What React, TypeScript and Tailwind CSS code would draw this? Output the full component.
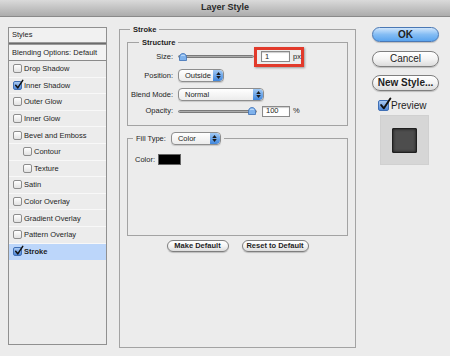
import type { ReactNode } from "react";

type StyleRow = { label: string; checked?: boolean; indent?: boolean; active?: boolean };

const styleRows: StyleRow[] = [
  { label: "Drop Shadow" },
  { label: "Inner Shadow", checked: true },
  { label: "Outer Glow" },
  { label: "Inner Glow" },
  { label: "Bevel and Emboss" },
  { label: "Contour", indent: true },
  { label: "Texture", indent: true },
  { label: "Satin" },
  { label: "Color Overlay" },
  { label: "Gradient Overlay" },
  { label: "Pattern Overlay" },
  { label: "Stroke", checked: true, active: true },
];

function Checkbox({ checked, big = false }: { checked?: boolean; big?: boolean }) {
  const box = big ? "h-[11px] w-[11px]" : "h-[9px] w-[9px]";
  return (
    <span
      className={`relative inline-block shrink-0 rounded-[2px] border ${box} ${
        checked
          ? "border-[#3f6fb5] bg-gradient-to-b from-[#a9c9f2] to-[#4f86d6]"
          : "border-[#8d8d8d] bg-gradient-to-b from-white to-[#e2e2e2]"
      }`}
    >
      {checked && (
        <svg
          viewBox="0 0 12 12"
          className={`absolute ${big ? "-top-[4px] left-[0px] h-[14px] w-[13px]" : "-top-[3px] left-[0px] h-[11px] w-[10px]"}`}
        >
          <path d="M2 7 L4.5 10 L10.5 1" fill="none" stroke="#111" strokeWidth="1.8" strokeLinecap="round" strokeLinejoin="round" />
        </svg>
      )}
    </span>
  );
}

function Stepper() {
  return (
    <span className="flex h-full w-[10px] shrink-0 flex-col items-center justify-center gap-[1px] rounded-r-[4px] bg-gradient-to-b from-[#9fc8f3] to-[#3f86dc]">
      <svg viewBox="0 0 6 4" className="h-[3px] w-[5px]">
        <path d="M0 4 L3 0 L6 4 Z" fill="#1b1b1b" />
      </svg>
      <svg viewBox="0 0 6 4" className="h-[3px] w-[5px]">
        <path d="M0 0 L3 4 L6 0 Z" fill="#1b1b1b" />
      </svg>
    </span>
  );
}

function Select({ value, width }: { value: string; width: string }) {
  return (
    <span
      className={`flex h-[13px] ${width} items-center overflow-hidden rounded-[4px] border border-[#8e8e8e] bg-gradient-to-b from-white to-[#ececec] shadow-[0_1px_1px_rgba(0,0,0,0.15)]`}
    >
      <span className="flex-1 pl-[6px] leading-none">{value}</span>
      <Stepper />
    </span>
  );
}

function Slider({ width, at }: { width: string; at: "start" | "end" }) {
  return (
    <span className={`relative flex h-[10px] ${width} items-center`}>
      <span className="h-[3px] w-full rounded-full border border-[#7a7a7a] bg-gradient-to-b from-[#8a8a8a] to-[#cfcfcf]" />
      <svg
        viewBox="0 0 8 8"
        className={`absolute top-[1px] h-[8px] w-[8px] ${at === "start" ? "left-[1px]" : "right-[1px]"}`}
      >
        <path d="M4 0.5 C6.2 0.5 7.5 2.2 7.5 4.2 L7.5 7.5 L0.5 7.5 L0.5 4.2 C0.5 2.2 1.8 0.5 4 0.5 Z" fill="#7fb2ec" stroke="#3c6fb4" strokeWidth="0.8" />
        <path d="M2 3 C2.5 2 5.5 2 6 3" fill="none" stroke="#d6e8fb" strokeWidth="0.8" />
      </svg>
    </span>
  );
}

function Field({ value, width }: { value: string; width: string }) {
  return (
    <span
      className={`flex h-[11px] ${width} items-center border border-[#8a8a8a] bg-white pl-[3px] leading-none shadow-[inset_0_1px_1px_rgba(0,0,0,0.2)]`}
    >
      {value}
    </span>
  );
}

function Row({ label, children, className = "" }: { label: string; children: ReactNode; className?: string }) {
  return (
    <div className={`flex items-center ${className}`}>
      <span className="w-[45px] shrink-0 text-right">{label}</span>
      <div className="ml-[5px] flex items-center">{children}</div>
    </div>
  );
}

function PillButton({ children, className = "", primary = false }: { children: ReactNode; className?: string; primary?: boolean }) {
  return (
    <button
      className={`flex items-center justify-center rounded-full border leading-none ${
        primary
          ? "border-[#4a78b4] bg-gradient-to-b from-[#cfe5fb] via-[#84bdf4] to-[#5aa4ee] font-bold"
          : "border-[#7f7f7f] bg-gradient-to-b from-white via-[#f4f4f4] to-[#dcdcdc]"
      } shadow-[0_1px_1px_rgba(0,0,0,0.2)] ${className}`}
    >
      {children}
    </button>
  );
}

export default function App() {
  return (
    <div className="flex h-[356px] w-[450px] flex-col overflow-hidden bg-[#ececec] font-['Liberation_Sans',Arial,sans-serif] text-[#1e1e1e]">
      <div className="flex h-[17px] shrink-0 items-center justify-center border-b border-[#8a8a8a] bg-gradient-to-b from-[#dadada] to-[#acacac] text-[9px] font-bold text-[#2a2a2a]">
        Layer Style
      </div>

      <div className="flex items-start pl-[8px] text-[7.5px]">
        {/* styles list */}
        <div className="mt-[10px] flex h-[318px] w-[99px] shrink-0 flex-col border border-[#909090] bg-[#ececec]">
          <div className="flex h-[14px] items-center bg-[#f1f1f1] pl-[3px]">Styles</div>
          <div className="h-[3px] border-y border-[#9a9a9a] bg-[#6c6c6c]" />
          <div className="flex h-[16px] items-center border-b border-[#8a8a8a] bg-[#f3f3f3] pl-[3px]">
            Blending Options: Default
          </div>
          {styleRows.map((row) => (
            <div
              key={row.label}
              className={`flex h-[16.6px] items-center gap-[2px] border-b ${
                row.active ? "border-[#bcd6fa] bg-[#bcd6fa] font-bold" : "border-[#f8f8f8]"
              } ${row.indent ? "pl-[14px]" : "pl-[4px]"}`}
            >
              <Checkbox checked={row.checked} />
              <span>{row.label}</span>
            </div>
          ))}
        </div>

        {/* stroke settings */}
        <fieldset className="ml-[12px] mt-[7.5px] h-[323px] w-[236px] shrink-0 border border-[#a3a3a3] px-[7px]">
          <legend className="ml-[3px] px-[3px] font-bold leading-[9px]">Stroke</legend>

          <fieldset className="mt-[4px] w-[221px] border border-[#a3a3a3] pb-[8px]">
            <legend className="ml-[11px] px-[3px] font-bold leading-[9px]">Structure</legend>
            <Row label="Size:" className="h-[20px]">
              <Slider width="w-[76px]" at="start" />
              <span className="flex h-[20px] w-[50px] items-center border-[3px] border-[#e23a2b] pl-[4px] shadow-[1px_1px_2px_rgba(0,0,0,0.35)]">
                <Field value="1" width="w-[29px]" />
                <span className="ml-[3px]">px</span>
              </span>
            </Row>
            <Row label="Position:" className="mt-[2.5px] h-[13px]">
              <Select value="Outside" width="w-[46px]" />
            </Row>
            <Row label="Blend Mode:" className="mt-[6px] h-[13px]">
              <Select value="Normal" width="w-[86px]" />
            </Row>
            <Row label="Opacity:" className="mt-[4px] h-[12px]">
              <Slider width="w-[79px]" at="end" />
              <span className="ml-[5px] flex items-center">
                <Field value="100" width="w-[28px]" />
                <span className="ml-[3px]">%</span>
              </span>
            </Row>
          </fieldset>

          <fieldset className="mt-[6px] h-[104px] w-[221px] border border-[#a3a3a3]">
            <legend className="ml-[5px] flex h-[13px] items-center px-[3px]">
              <span>Fill Type:</span>
              <span className="ml-[5px]">
                <Select value="Color" width="w-[50px]" />
              </span>
            </legend>
            <div className="mt-[9px] flex h-[11px] items-center pl-[7px]">
              <span>Color:</span>
              <span className="ml-[3px] h-[11px] w-[23px] border border-[#666] bg-black" />
            </div>
          </fieldset>

          <div className="mt-[4px] flex justify-center gap-[13px] font-bold">
            <PillButton className="h-[12px] w-[62px]">Make Default</PillButton>
            <PillButton className="h-[12px] w-[67px]">Reset to Default</PillButton>
          </div>
        </fieldset>

        {/* buttons */}
        <div className="ml-[16px] mt-[10px] flex w-[67px] shrink-0 flex-col text-[10px]">
          <PillButton primary className="h-[15px] w-full">OK</PillButton>
          <PillButton className="mt-[9px] h-[16px] w-full">Cancel</PillButton>
          <PillButton className="mt-[8px] h-[16px] w-full font-bold">New Style...</PillButton>
          <div className="mt-[9px] flex h-[11px] items-center gap-[2px] pl-[6px]">
            <Checkbox checked big />
            <span>Preview</span>
          </div>
          <div className="ml-[8px] mt-[4px] flex h-[50px] w-[49px] items-center justify-center border border-[#d0d0d0] bg-[#d6d6d6]">
            <span className="h-[25px] w-[25px] rounded-[1px] border border-[#1f1f1f] bg-[#4d4d4d] shadow-[inset_0_0_3px_rgba(0,0,0,0.8)]" />
          </div>
        </div>
      </div>
    </div>
  );
}
